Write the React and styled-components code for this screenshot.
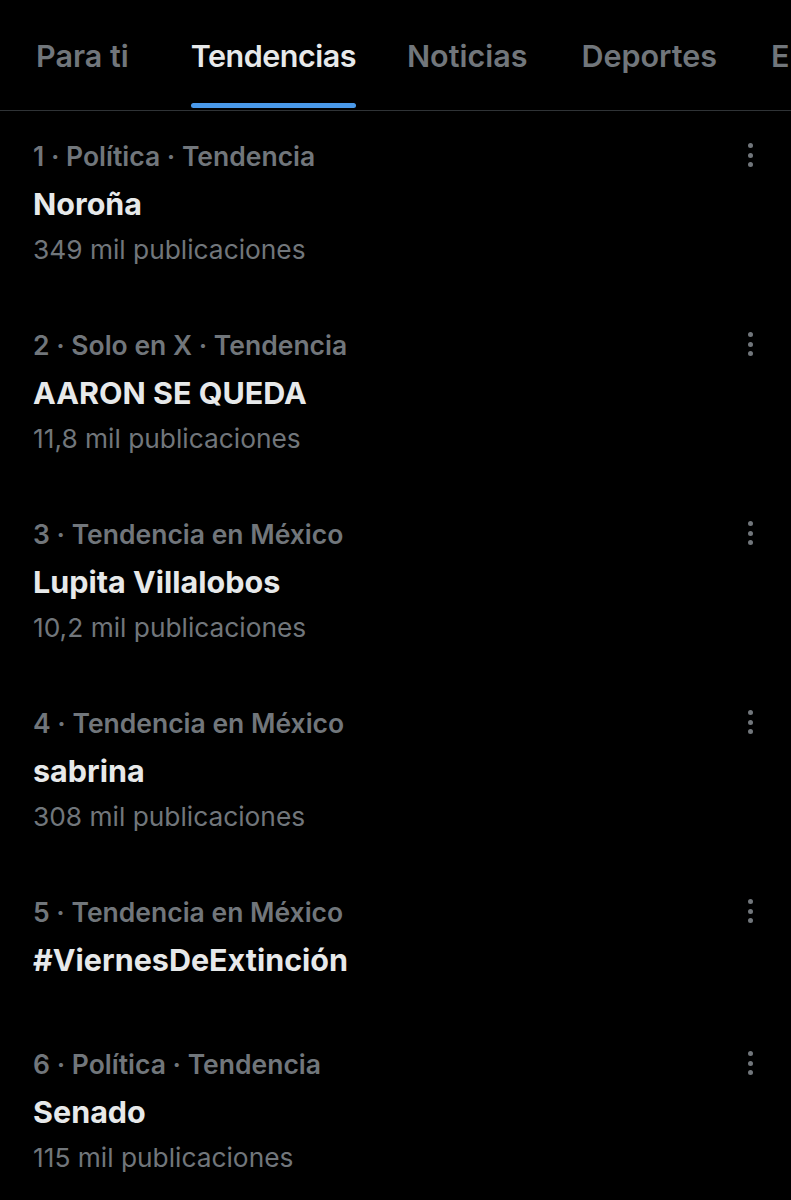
import React from 'react';
import styled, { createGlobalStyle } from 'styled-components';

const GlobalStyle = createGlobalStyle`
  html, body {
    margin: 0;
    padding: 0;
    background: #000;
  }
  body {
    font-family: Inter, "Noto Sans", "DejaVu Sans", sans-serif;
    -webkit-font-smoothing: antialiased;
  }
`;

const Page = styled.div`
  width: 791px;
  min-height: 1200px;
  background: #000;
  overflow: hidden;
`;

const TabBar = styled.nav`
  display: flex;
  align-items: stretch;
  height: 110px;
  border-bottom: 1px solid #2f3336;
  padding-left: 9px;
  white-space: nowrap;
`;

const Tab = styled.div`
  position: relative;
  display: flex;
  align-items: center;
  padding: ${p => (p.active ? '0 24px 0 35px' : '0 27px')};
  font-size: 30.5px;
  font-weight: 600;
  letter-spacing: ${p => (p.active ? '-0.5px' : '0')};
  color: ${p => (p.active ? '#e7e9ea' : '#71767b')};

  &::after {
    content: '';
    display: ${p => (p.active ? 'block' : 'none')};
    position: absolute;
    left: 35px;
    right: 24px;
    bottom: 2px;
    height: 5px;
    border-radius: 3px;
    background: #4a99e9;
  }
`;

const List = styled.div`
  display: flex;
  flex-direction: column;
`;

const Row = styled.div`
  display: flex;
  justify-content: space-between;
  padding: 22px 36px ${p => (p.compact ? '36px' : '27px')} 33px;
`;

const Info = styled.div`
  display: flex;
  flex-direction: column;
`;

const Meta = styled.div`
  font-size: 26.5px;
  line-height: 47px;
  font-weight: 600;
  color: #71767b;
`;

const Title = styled.div`
  font-size: 30.5px;
  line-height: 47px;
  font-weight: 700;
  color: #e7e9ea;
`;

const Count = styled.div`
  font-size: 26.3px;
  line-height: 46px;
  font-weight: 400;
  color: #71767b;
`;

const More = styled.div`
  display: flex;
  flex-direction: column;
  align-items: center;
  gap: 4.5px;
  width: 10px;
  padding-top: 10px;
`;

const Dot = styled.span`
  width: 5px;
  height: 5px;
  border-radius: 50%;
  background: #71767b;
`;

const tabs = ['Para ti', 'Tendencias', 'Noticias', 'Deportes', 'Entretenimiento'];

const trends = [
  { meta: '1 · Política · Tendencia', title: 'Noroña', count: '349 mil publicaciones' },
  { meta: '2 · Solo en X · Tendencia', title: 'AARON SE QUEDA', count: '11,8 mil publicaciones' },
  { meta: '3 · Tendencia en México', title: 'Lupita Villalobos', count: '10,2 mil publicaciones' },
  { meta: '4 · Tendencia en México', title: 'sabrina', count: '308 mil publicaciones' },
  { meta: '5 · Tendencia en México', title: '#ViernesDeExtinción' },
  { meta: '6 · Política · Tendencia', title: 'Senado', count: '115 mil publicaciones' },
];

export default function App() {
  return (
    <Page>
      <GlobalStyle />
      <TabBar>
        {tabs.map(t => (
          <Tab key={t} active={t === 'Tendencias'}>
            {t}
          </Tab>
        ))}
      </TabBar>
      <List>
        {trends.map(item => (
          <Row key={item.title} compact={!item.count}>
            <Info>
              <Meta>{item.meta}</Meta>
              <Title>{item.title}</Title>
              {item.count && <Count>{item.count}</Count>}
            </Info>
            <More>
              <Dot />
              <Dot />
              <Dot />
            </More>
          </Row>
        ))}
      </List>
    </Page>
  );
}
